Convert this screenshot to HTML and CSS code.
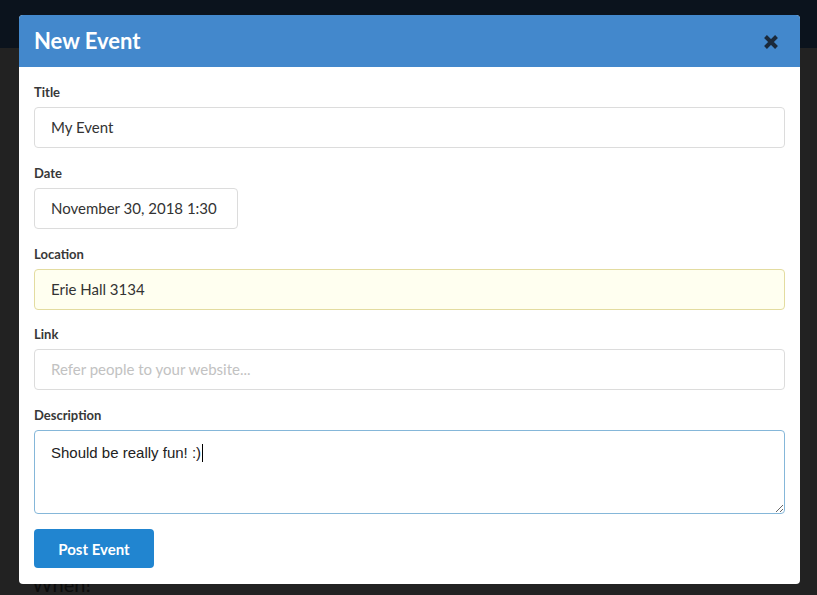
FILE: index.html
```html
<!DOCTYPE html>
<html>
<head>
<meta charset="utf-8">
<link rel="stylesheet" href="styles.css">
</head>
<body>
<div class="navbar"></div>
<main class="page">
  <h2 class="page-heading">When!</h2>
</main>
<div class="modal">
  <div class="modal-header">
    <h1 class="modal-title">New Event</h1>
    <svg class="close-icon" width="16" height="16" viewBox="0 0 16 16" aria-label="Close">
      <path d="M2.5 2.5 L13.5 13.5 M13.5 2.5 L2.5 13.5" stroke="#1b2a3b" stroke-width="4" stroke-linecap="butt"/>
    </svg>
  </div>
  <form class="modal-body">
    <div class="field">
      <label class="label">Title</label>
      <div class="input">My Event</div>
    </div>
    <div class="field">
      <label class="label">Date</label>
      <div class="input input-date">November 30, 2018 1:30</div>
    </div>
    <div class="field">
      <label class="label">Location</label>
      <div class="input input-warn">Erie Hall 3134</div>
    </div>
    <div class="field">
      <label class="label">Link</label>
      <div class="input input-placeholder">Refer people to your website...</div>
    </div>
    <div class="field">
      <label class="label">Description</label>
      <div class="textarea">Should be really fun! :)<span class="caret"></span></div>
    </div>
    <button type="button" class="btn-primary">Post Event</button>
  </form>
</div>
</body>
</html>
```
FILE: styles.css
```css
html, body {
  margin: 0;
  padding: 0;
}
body {
  width: 817px;
  height: 595px;
  overflow: hidden;
  background: #222222;
  font-family: Lato, "Liberation Sans", sans-serif;
  position: relative;
}
.navbar {
  height: 48px;
  background: #0b131d;
}
.page {
  padding: 524px 0 0 32px;
}
.page-heading {
  margin: 0;
  font-size: 20px;
  font-weight: 400;
  color: #0c0c0c;
  line-height: 24px;
}
.modal {
  position: absolute;
  left: 19px;
  top: 15px;
  width: 781px;
  height: 569px;
  background: #ffffff;
  border-radius: 4px;
  overflow: hidden;
}
.modal-header {
  height: 52px;
  background: #4388cc;
  display: flex;
  align-items: center;
  justify-content: space-between;
  padding: 0 21px 0 15px;
}
.modal-title {
  margin: 0;
  color: #ffffff;
  font-size: 22px;
  font-weight: 700;
  line-height: 26px;
}
.close-icon {
  display: block;
  margin-top: 1px;
}
.modal-body {
  display: flex;
  flex-direction: column;
  padding: 18px 15px 16px 15px;
  gap: 17.75px;
}
.field {
  display: flex;
  flex-direction: column;
  align-items: flex-start;
  gap: 6px;
}
.label {
  font-size: 13px;
  font-weight: 700;
  line-height: 15px;
  color: #383838;
}
.label {
  padding-bottom: 1px;
}
.input {
  box-sizing: border-box;
  width: 751px;
  height: 41px;
  border: 1px solid #dcdcdc;
  border-radius: 4px;
  background: #ffffff;
  padding: 0 16px;
  font-size: 15px;
  line-height: 39px;
  color: #333333;
}
.input-date {
  width: 204px;
}
.input-warn {
  background: #fffff0;
  border-color: #e3dca0;
}
.input-placeholder {
  color: #c2c2c2;
}
.textarea {
  box-sizing: border-box;
  width: 751px;
  height: 84px;
  border: 1px solid #85b7d9;
  border-radius: 4px;
  padding: 13px 16px 11px 16px;
  font-family: "Liberation Sans", Arial, sans-serif;
  font-size: 15px;
  line-height: 18px;
  color: #222222;
  resize: vertical;
  overflow: auto;
}
.caret {
  display: inline-block;
  width: 1px;
  height: 18px;
  background: #000000;
  vertical-align: top;
  margin-left: 1px;
}
.btn-primary {
  width: 120px;
  height: 39px;
  margin-top: -2.75px;
  border: none;
  border-radius: 4px;
  background: #2185d0;
  color: #ffffff;
  font-family: Lato, "Liberation Sans", sans-serif;
  font-size: 15px;
  font-weight: 700;
  padding: 0;
  cursor: pointer;
}
```
